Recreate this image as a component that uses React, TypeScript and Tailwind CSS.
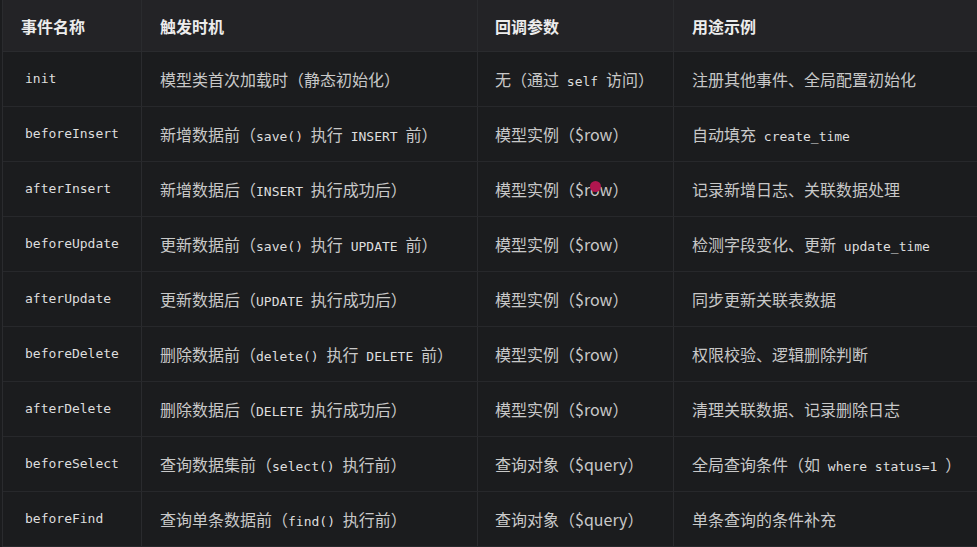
const mono = "font-['DejaVu_Sans_Mono','Liberation_Mono',monospace] text-[13px] text-[#dedede]"

type Cell = (string | { code: string })[]

const rows: { name: string; when: Cell; args: Cell; use: Cell }[] = [
  { name: 'init', when: ['模型类首次加载时（静态初始化）'], args: ['无（通过', { code: ' self ' }, '访问）'], use: ['注册其他事件、全局配置初始化'] },
  { name: 'beforeInsert', when: ['新增数据前（', { code: 'save() ' }, '执行', { code: ' INSERT ' }, '前）'], args: ['模型实例（$row）'], use: ['自动填充', { code: ' create_time' }] },
  { name: 'afterInsert', when: ['新增数据后（', { code: 'INSERT ' }, '执行成功后）'], args: ['模型实例（$row）'], use: ['记录新增日志、关联数据处理'] },
  { name: 'beforeUpdate', when: ['更新数据前（', { code: 'save() ' }, '执行', { code: ' UPDATE ' }, '前）'], args: ['模型实例（$row）'], use: ['检测字段变化、更新', { code: ' update_time' }] },
  { name: 'afterUpdate', when: ['更新数据后（', { code: 'UPDATE ' }, '执行成功后）'], args: ['模型实例（$row）'], use: ['同步更新关联表数据'] },
  { name: 'beforeDelete', when: ['删除数据前（', { code: 'delete() ' }, '执行', { code: ' DELETE ' }, '前）'], args: ['模型实例（$row）'], use: ['权限校验、逻辑删除判断'] },
  { name: 'afterDelete', when: ['删除数据后（', { code: 'DELETE ' }, '执行成功后）'], args: ['模型实例（$row）'], use: ['清理关联数据、记录删除日志'] },
  { name: 'beforeSelect', when: ['查询数据集前（', { code: 'select() ' }, '执行前）'], args: ['查询对象（$query）'], use: ['全局查询条件（如', { code: ' where status=1 ' }, '）'] },
  { name: 'beforeFind', when: ['查询单条数据前（', { code: 'find() ' }, '执行前）'], args: ['查询对象（$query）'], use: ['单条查询的条件补充'] },
]

function Text({ parts }: { parts: Cell }) {
  return (
    <span className="whitespace-pre">
      {parts.map((p, i) =>
        typeof p === 'string' ? <span key={i}>{p}</span> : <code key={i} className={mono}>{p.code}</code>
      )}
    </span>
  )
}

const cols = 'grid grid-cols-[139px_336px_196px_304px]'
const cell = 'flex items-center border-r border-[#2a2b2e]'

export default function App() {
  return (
    <div className="relative w-[977px] h-[547px] overflow-hidden bg-[#1b1c1e] pl-[2px] font-['Noto_Sans_CJK_SC',sans-serif] text-[16px] text-[#c8c8c8]">
      <div className="border-l border-[#2a2b2e] h-full">
        <div className={`${cols} h-[52px] bg-[#232326] border-b border-[#2a2b2e] font-bold text-[16px] text-[#ececec]`}>
          <div className={`${cell} pl-[18px]`}>事件名称</div>
          <div className={`${cell} pl-[18px]`}>触发时机</div>
          <div className={`${cell} pl-[17px]`}>回调参数</div>
          <div className={`${cell} pl-[18px]`}>用途示例</div>
        </div>
        {rows.map((r) => (
          <div key={r.name} className={`${cols} h-[55px] border-b border-[#27282b]`}>
            <div className={`${cell} pl-[22px]`}>
              <code className={mono}>{r.name}</code>
            </div>
            <div className={`${cell} pl-[18px]`}>
              <Text parts={r.when} />
            </div>
            <div className={`${cell} pl-[17px]`}>
              <Text parts={r.args} />
            </div>
            <div className={`${cell} pl-[18px]`}>
              <Text parts={r.use} />
            </div>
          </div>
        ))}
      </div>
      <div className="absolute left-[590px] top-[181px] w-[11px] h-[11px] rounded-full bg-[#b0164f]" />
    </div>
  )
}
